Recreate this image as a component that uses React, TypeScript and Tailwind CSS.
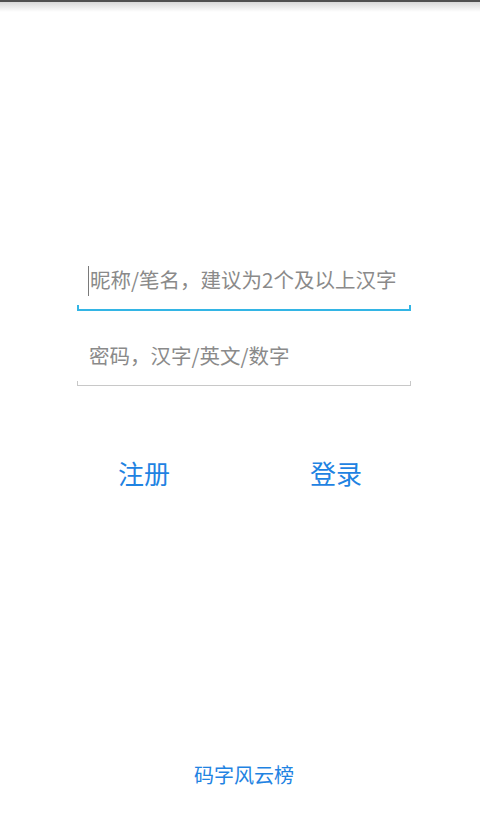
import React from 'react';

const cjk = '"Noto Sans CJK SC", "Noto Sans", sans-serif';

function Field({ hint, focused }: { hint: string; focused?: boolean }) {
  return (
    <div className="w-[334px] ml-[77px]">
      <div className="flex items-center h-[30px] pl-[11px]">
        {focused && <span className="w-px h-[30px] bg-[#7a7a7a] shrink-0" />}
        <span className="ml-[1px] text-[20.5px] leading-[30px] text-[#8a8a8a] whitespace-nowrap pb-[4px]">
          {hint}
        </span>
      </div>
      {focused ? (
        <div className="mt-[9px] h-[6px] border-x-2 border-b-2 border-[#33b5e5]" />
      ) : (
        <div className="mt-[9px] h-[5px] border-x border-b border-[#c8c8c8]" />
      )}
    </div>
  );
}

export default function App() {
  return (
    <div className="flex flex-col h-[824px] w-[480px] bg-white" style={{ fontFamily: cjk }}>
      <div className="h-[2px] bg-[#505050]" />
      <div className="h-[10px] bg-gradient-to-b from-[#d8d8d8] to-white" />

      <div className="mt-[254px]">
        <Field hint="昵称/笔名，建议为2个及以上汉字" focused />
      </div>
      <div className="mt-[31px]">
        <Field hint="密码，汉字/英文/数字" />
      </div>

      <div className="mt-[69px] flex justify-center">
        <button className="w-[192px] text-[26px] leading-[36px] text-[#1f83e2] pb-[3px]">注册</button>
        <button className="w-[192px] text-[26px] leading-[36px] text-[#1f83e2] pb-[3px]">登录</button>
      </div>

      <div className="mt-auto pb-[35px] flex justify-center pl-[8px]">
        <span className="text-[20px] leading-[28px] text-[#1f83e2]">码字风云榜</span>
      </div>
    </div>
  );
}
